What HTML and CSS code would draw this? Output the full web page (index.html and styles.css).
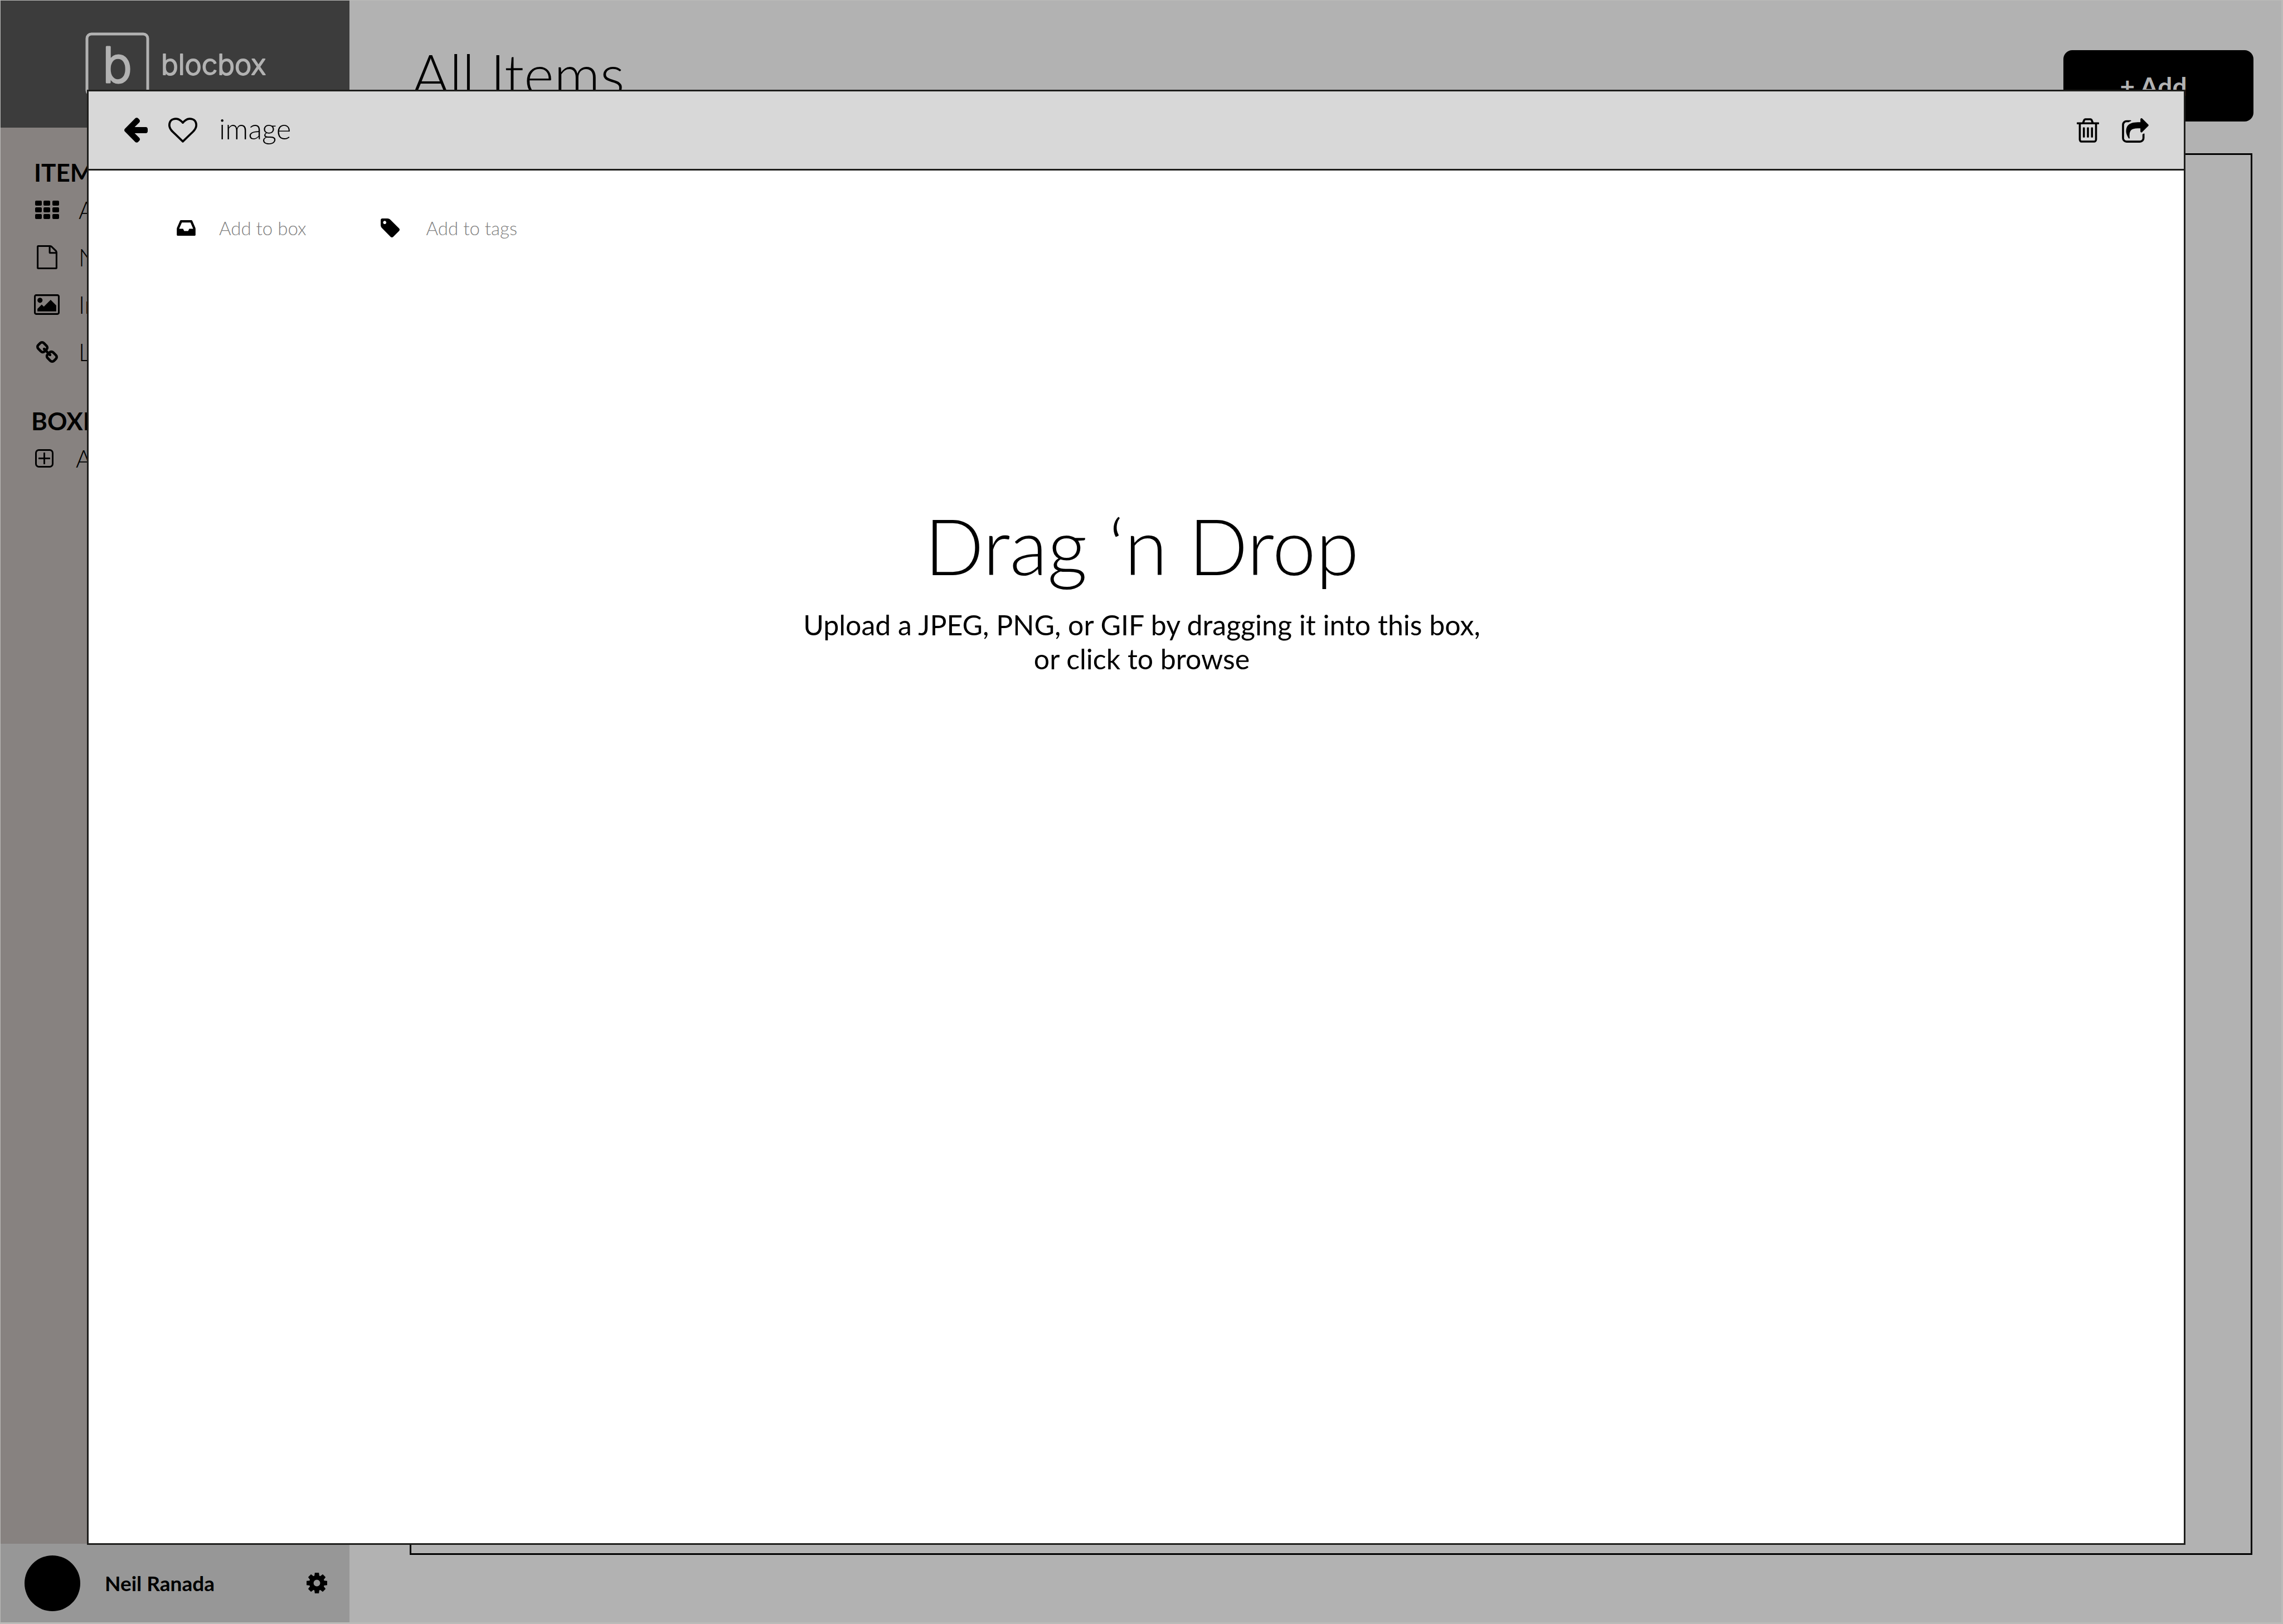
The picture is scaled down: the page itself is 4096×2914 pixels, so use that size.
FILE: index.html
```html
<!DOCTYPE html>
<html lang="en">
<head>
<meta charset="utf-8">
<title>blocbox</title>
<link rel="stylesheet" href="styles.css">
</head>
<body>
<div class="app">
  <aside class="sidebar">
    <a class="brand" href="#" aria-label="blocbox home">
      <svg class="brand-logo" viewBox="0 0 340 118" width="340" height="118">
        <rect class="brand-box" x="4" y="4" width="109" height="109" rx="8"/>
        <text class="brand-mark" x="32" y="91">b</text>
        <text class="brand-name" x="137" y="77">blocbox</text>
      </svg>
    </a>
    <nav class="nav">
      <section class="nav-group nav-items">
        <h2 class="nav-title">ITEMS</h2>
        <a class="nav-link" href="#"><span class="nav-icon"><svg width="43" height="33" viewBox="0 0 43 33"><path d="M2 0h8q2 0 2 2v5q0 2-2 2h-8q-2 0-2-2v-5q0-2 2-2zM17 0h8q2 0 2 2v5q0 2-2 2h-8q-2 0-2-2v-5q0-2 2-2zM33 0h8q2 0 2 2v5q0 2-2 2h-8q-2 0-2-2v-5q0-2 2-2zM2 12h8q2 0 2 2v5q0 2-2 2h-8q-2 0-2-2v-5q0-2 2-2zM17 12h8q2 0 2 2v5q0 2-2 2h-8q-2 0-2-2v-5q0-2 2-2zM33 12h8q2 0 2 2v5q0 2-2 2h-8q-2 0-2-2v-5q0-2 2-2zM2 24h8q2 0 2 2v5q0 2-2 2h-8q-2 0-2-2v-5q0-2 2-2zM17 24h8q2 0 2 2v5q0 2-2 2h-8q-2 0-2-2v-5q0-2 2-2zM33 24h8q2 0 2 2v5q0 2-2 2h-8q-2 0-2-2v-5q0-2 2-2z"/></svg></span>All Items</a>
        <a class="nav-link" href="#"><span class="nav-icon"><svg width="37" height="43" viewBox="128 0 1536 1792"><path d="M1596 380q28 28 48 76t20 88v1152q0 40-28 68t-68 28h-1344q-40 0-68-28t-28-68v-1600q0-40 28-68t68-28h896q40 0 88 20t76 48zm-444-244v376h376q-10-29-22-41l-313-313q-12-12-41-22zm384 1528v-1024h-416q-40 0-68-28t-28-68v-416h-768v1536h1280z"/></svg></span>Notes</a>
        <a class="nav-link" href="#"><span class="nav-icon"><svg width="46" height="37" viewBox="-64 128 1920 1536"><path d="M576 576q0 80-56 136t-136 56-136-56-56-136 56-136 136-56 136 56 56 136zm1024 384v448h-1408v-192l320-320 160 160 512-512zm96-704h-1600q-13 0-22.5 9.5t-9.5 22.5v1216q0 13 9.5 22.5t22.5 9.5h1600q13 0 22.5-9.5t9.5-22.5v-1216q0-13-9.5-22.5t-22.5-9.5zm160 32v1216q0 66-47 113t-113 47h-1600q-66 0-113-47t-47-113v-1216q0-66 47-113t113-47h1600q66 0 113 47t47 113z"/></svg></span>Images</a>
        <a class="nav-link" href="#"><span class="nav-icon"><svg width="39" height="39" viewBox="80 16 1632 1632"><path d="M1520 1216q0-40-28-68l-208-208q-28-28-68-28-42 0-72 32 3 3 19 18.5t21.5 21.5 15 19 13 25.5 3.5 27.5q0 40-28 68t-68 28q-15 0-27.5-3.5t-25.5-13-19-15-21.5-21.5-18.5-19q-33 31-33 73 0 40 28 68l206 207q27 27 68 27 40 0 68-26l147-146q28-28 28-67zm-703-705q0-40-28-68l-206-207q-28-28-68-28-39 0-68 27l-147 146q-28 28-28 67 0 40 28 68l208 208q27 27 68 27 42 0 72-31-3-3-19-18.5t-21.5-21.5-15-19-13-25.5-3.5-27.5q0-40 28-68t68-28q15 0 27.5 3.5t25.5 13 19 15 21.5 21.5 18.5 19q33-31 33-73zm895 705q0 120-85 203l-147 146q-83 83-203 83-121 0-204-85l-206-207q-83-83-83-203 0-123 88-209l-88-88q-86 88-208 88-120 0-204-84l-208-208q-84-84-84-204t85-203l147-146q83-83 203-83 121 0 204 85l206 207q83 83 83 203 0 123-88 209l88 88q86-88 208-88 120 0 204 84l208 208q84 84 84 204z"/></svg></span>Links</a>
      </section>
      <section class="nav-group nav-boxes">
        <h2 class="nav-title">BOXES</h2>
        <a class="nav-link" href="#"><span class="nav-icon"><svg width="33" height="33" viewBox="192 128 1408 1408"><path d="M1344 800v64q0 14-9 23t-23 9h-352v352q0 14-9 23t-23 9h-64q-14 0-23-9t-9-23v-352h-352q-14 0-23-9t-9-23v-64q0-14 9-23t23-9h352v-352q0-14 9-23t23-9h64q14 0 23 9t9 23v352h352q14 0 23 9t9 23zm128 448v-832q0-66-47-113t-113-47h-832q-66 0-113 47t-47 113v832q0 66 47 113t113 47h832q66 0 113-47t47-113zm128-832v832q0 119-84.5 203.5t-203.5 84.5h-832q-119 0-203.5-84.5t-84.5-203.5v-832q0-119 84.5-203.5t203.5-84.5h832q119 0 203.5 84.5t84.5 203.5z"/></svg></span>Add</a>
      </section>
    </nav>
    <footer class="account">
      <span class="avatar"></span>
      <span class="account-name">Neil Ranada</span>
      <button class="icon-button" type="button" aria-label="Settings"><svg width="37" height="37" viewBox="-81 -81 162 162"><circle r="43" fill="none" stroke="currentColor" stroke-width="34"/><path id="teeth" d="M-16-81h32l4 28h-40zM-16 81h32l4-28h-40z"/><use href="#teeth" transform="rotate(45)"/><use href="#teeth" transform="rotate(90)"/><use href="#teeth" transform="rotate(135)"/></svg></button>
    </footer>
  </aside>
  <main class="main">
    <header class="main-header">
      <h1 class="page-title">All Items</h1>
      <button class="add-button" type="button">+ Add</button>
    </header>
    <div class="board"></div>
  </main>
</div>

<div class="overlay">
  <section class="modal" role="dialog" aria-label="image">
    <header class="modal-header">
      <button class="icon-button" type="button" aria-label="Back"><svg width="42" height="45" viewBox="192 181 1472 1558"><path d="M1664 896v128q0 53-32.5 90.5t-84.5 37.5h-704l293 294q38 36 38 90t-38 90l-75 76q-37 37-90 37-52 0-91-37l-651-652q-37-37-37-90 0-52 37-91l651-650q38-38 91-38 52 0 90 38l75 74q38 38 38 91t-38 91l-293 293h704q52 0 84.5 37.5t32.5 90.5z"/></svg></button>
      <button class="icon-button" type="button" aria-label="Favourite"><svg width="52" height="45" viewBox="0 128 1792 1536"><path d="M1664 596q0-81-21.500-143t-55-98.500-81.500-59.500-94-31-98-8-112 25.500-110.500 64-86.500 72-60 61.500q-18 22-49 22t-49-22q-24-28-60-61.500t-86.500-72-110.500-64-112-25.500-98 8-94 31-81.500 59.500-55 98.500-21.500 143q0 168 187 355l581 560 580-559q188-188 188-356zm128 0q0 221-229 450l-623 600q-18 18-44 18t-44-18l-624-602q-10-8-27.500-26t-55.500-65.500-68-97.500-53.500-121-23.500-138q0-220 127-344t351-124q62 0 126.500 21.500t120 58 95.500 68.500 76 68q36-36 76-68t95.500-68.500 120-58 126.500-21.500q224 0 351 124t127 344z"/></svg></button>
      <h2 class="modal-title">image</h2>
      <div class="modal-actions">
        <button class="icon-button" type="button" aria-label="Delete"><svg width="40" height="44" viewBox="192 128 1408 1536"><path d="M704 736v576q0 14-9 23t-23 9h-64q-14 0-23-9t-9-23v-576q0-14 9-23t23-9h64q14 0 23 9t9 23zm256 0v576q0 14-9 23t-23 9h-64q-14 0-23-9t-9-23v-576q0-14 9-23t23-9h64q14 0 23 9t9 23zm256 0v576q0 14-9 23t-23 9h-64q-14 0-23-9t-9-23v-576q0-14 9-23t23-9h64q14 0 23 9t9 23zm128 724v-948h-896v948q0 22 7 40.500t14.500 27 10.500 8.500h832q3 0 10.500-8.500t14.500-27 7-40.500zm-672-1076h448l-48-117q-7-9-17-11h-317q-10 2-17 11zm928 32v64q0 14-9 23t-23 9h-96v948q0 83-47 143.500t-113 60.500h-832q-66 0-113-58.500t-47-141.500v-952h-96q-14 0-23-9t-9-23v-64q0-14 9-23t23-9h309l70-167q15-37 54-63t79-26h320q40 0 79 26t54 63l70 167h309q14 0 23 9t9 23z"/></svg></button>
        <button class="icon-button" type="button" aria-label="Share"><svg width="48" height="44" viewBox="64 0 1664 1536"><path d="M1472 989v259q0 119-84.500 203.500t-203.500 84.500h-832q-119 0-203.500-84.500t-84.500-203.500v-832q0-119 84.500-203.500t203.500-84.500h255q13 0 22.500 9.500t9.500 22.500q0 27-26 32-77 26-133 60-10 4-16 4h-112q-66 0-113 47t-47 113v832q0 66 47 113t113 47h832q66 0 113-47t47-113v-214q0-19 18-29 28-13 54-37 16-16 35-8 21 9 21 29zm237-496l-384 384q-18 19-45 19-12 0-25-5-39-17-39-59v-192h-160q-323 0-438 131-119 137-74 473 3 23-20 34-8 2-12 2-16 0-26-13-10-14-21-31t-39.500-68.500-49.500-99.500-38.500-114-17.500-122q0-49 3.500-91t14-90 28-88 47-81.500 68.500-74 94.500-61.500 124.500-48.500 159.500-30.500 196.500-11h160v-192q0-42 39-59 13-5 25-5 26 0 45 19l384 384q19 19 19 45t-19 45z"/></svg></button>
      </div>
    </header>
    <div class="toolbar">
      <button class="tool tool-box" type="button"><svg width="34" height="28" viewBox="128 256 1536 1280"><path d="M1151 960h316q-1-3-2.500-8.500t-2.500-7.500l-212-496h-708l-212 496q-1 3-2.500 8.500t-2.500 7.500h316l95 192h320zm513 30v482q0 26-19 45t-45 19h-1408q-26 0-45-19t-19-45v-482q0-62 25-123l238-552q10-25 36.500-42t52.500-17h832q26 0 52.500 17t36.500 42l238 552q25 61 25 123z"/></svg>Add to box</button>
      <button class="tool tool-tags" type="button"><svg width="34" height="34" viewBox="128 128 1515 1515"><path d="M576 448q0-53-37.500-90.500t-90.500-37.500-90.500 37.500-37.500 90.500 37.500 90.500 90.500 37.500 90.500-37.500 37.500-90.500zm1067 576q0 53-37 90l-491 492q-39 37-91 37-53 0-90-37l-715-716q-38-37-64.500-101t-26.500-117v-416q0-52 38-90t90-38h416q53 0 117 26.500t102 64.500l715 714q37 39 37 91z"/></svg>Add to tags</button>
    </div>
    <label class="dropzone">
      <input class="file-input" type="file" accept="image/jpeg,image/png,image/gif">
      <span class="drop-title">Drag ‘n Drop</span>
      <span class="drop-text">Upload a JPEG, PNG, or GIF by dragging it into this box,<br>or click to browse</span>
    </label>
  </section>
</div>
</body>
</html>
```
FILE: styles.css
```css
* { box-sizing: border-box; }

body {
  margin: 0;
  font-family: Lato, "Open Sans", sans-serif;
  color: #000;
}

h1, h2 { margin: 0; }

svg { display: block; fill: currentColor; }

button { font-family: inherit; cursor: pointer; }

.app {
  display: flex;
  min-height: 100vh;
  background: #b2b2b2;
  border: solid #bbbbb9;
  border-width: 1px 3px 3px 1px;
}

/* Sidebar */
.sidebar {
  display: flex;
  flex-direction: column;
  flex: none;
  width: 626px;
  background: #878280;
}

.brand {
  display: block;
  height: 228px;
  padding: 56px 0 0 151px;
  background: #3c3c3c;
  color: #b2b2b2;
}

.brand-box { fill: none; stroke: currentColor; stroke-width: 5px; }

.brand-mark,
.brand-name {
  font-family: Inter, Lato, sans-serif;
  font-weight: 300;
  stroke: currentColor;
  stroke-linejoin: round;
}

.brand-mark { font-size: 88px; stroke-width: 3px; }
.brand-name { font-size: 51px; stroke-width: 2px; }

.nav { flex: 1; padding-top: 55px; }

.nav-items { padding-left: 60px; }
.nav-boxes { padding-left: 55px; margin-top: 56px; }

.nav-title {
  font-size: 44px;
  line-height: 50px;
  font-weight: 700;
}

.nav-link {
  display: flex;
  align-items: center;
  gap: 34px;
  height: 85px;
  font-size: 43px;
  font-weight: 300;
  color: inherit;
  text-decoration: none;
}

.nav-icon { display: flex; justify-content: center; width: 46px; }

.account {
  display: flex;
  align-items: center;
  height: 141px;
  padding: 0 40px 0 43px;
  background: #979797;
}

.avatar { width: 100px; height: 100px; border-radius: 50%; background: #000; }

.account-name {
  flex: 1;
  margin-left: 44px;
  font-size: 37px;
  font-weight: 700;
}

.icon-button { padding: 0; border: 0; background: none; color: inherit; }

/* Main column */
.main {
  display: flex;
  flex-direction: column;
  flex: 1;
  gap: 57px;
  padding: 89px 50px 121px 108px;
}

.main-header {
  display: flex;
  justify-content: space-between;
  align-items: flex-start;
  padding-left: 4px;
}

.page-title {
  font-size: 103px;
  line-height: 84px;
  font-weight: 300;
}

.add-button {
  width: 341px;
  height: 128px;
  padding: 0 18px 0 0;
  border: 0;
  border-radius: 16px;
  background: #000;
  color: #b2b2b2;
  font-size: 46px;
  font-weight: 700;
}

.board { flex: 1; margin-right: 2px; border: 3px solid #000; }

/* Modal */
.overlay {
  position: fixed;
  inset: 0;
  display: flex;
  padding: 161px 175px 142px 156px;
}

.modal {
  display: flex;
  flex-direction: column;
  flex: 1;
  border: 3px solid #1e1e1c;
  background: #fff;
}

.modal-header {
  display: flex;
  align-items: center;
  gap: 37px;
  height: 142px;
  padding: 0 63px 0 64px;
  border-bottom: 3px solid #1e1e1c;
  background: #d8d8d8;
}

.modal-title {
  flex: 1;
  padding: 0 0 6px 2px;
  font-size: 51px;
  font-weight: 300;
}

.modal-actions { display: flex; gap: 41px; }

.toolbar {
  display: flex;
  align-items: center;
  gap: 133px;
  padding: 79px 158px 0;
}

.tool {
  display: flex;
  align-items: center;
  gap: 42px;
  height: 48px;
  padding: 0;
  border: 0;
  background: none;
  color: #808080;
  font-size: 33px;
  font-weight: 300;
}

.tool svg { color: #000; }
.tool-tags { gap: 48px; }

.dropzone {
  display: flex;
  flex-direction: column;
  flex: 1;
  gap: 29px;
  align-items: center;
  padding: 461px 0 0 20px;
  text-align: center;
  cursor: pointer;
}

.file-input { position: absolute; width: 1px; height: 1px; opacity: 0; }

.drop-title { font-size: 140px; line-height: 168px; font-weight: 300; }
.drop-text { font-size: 50px; line-height: 61px; }
```
